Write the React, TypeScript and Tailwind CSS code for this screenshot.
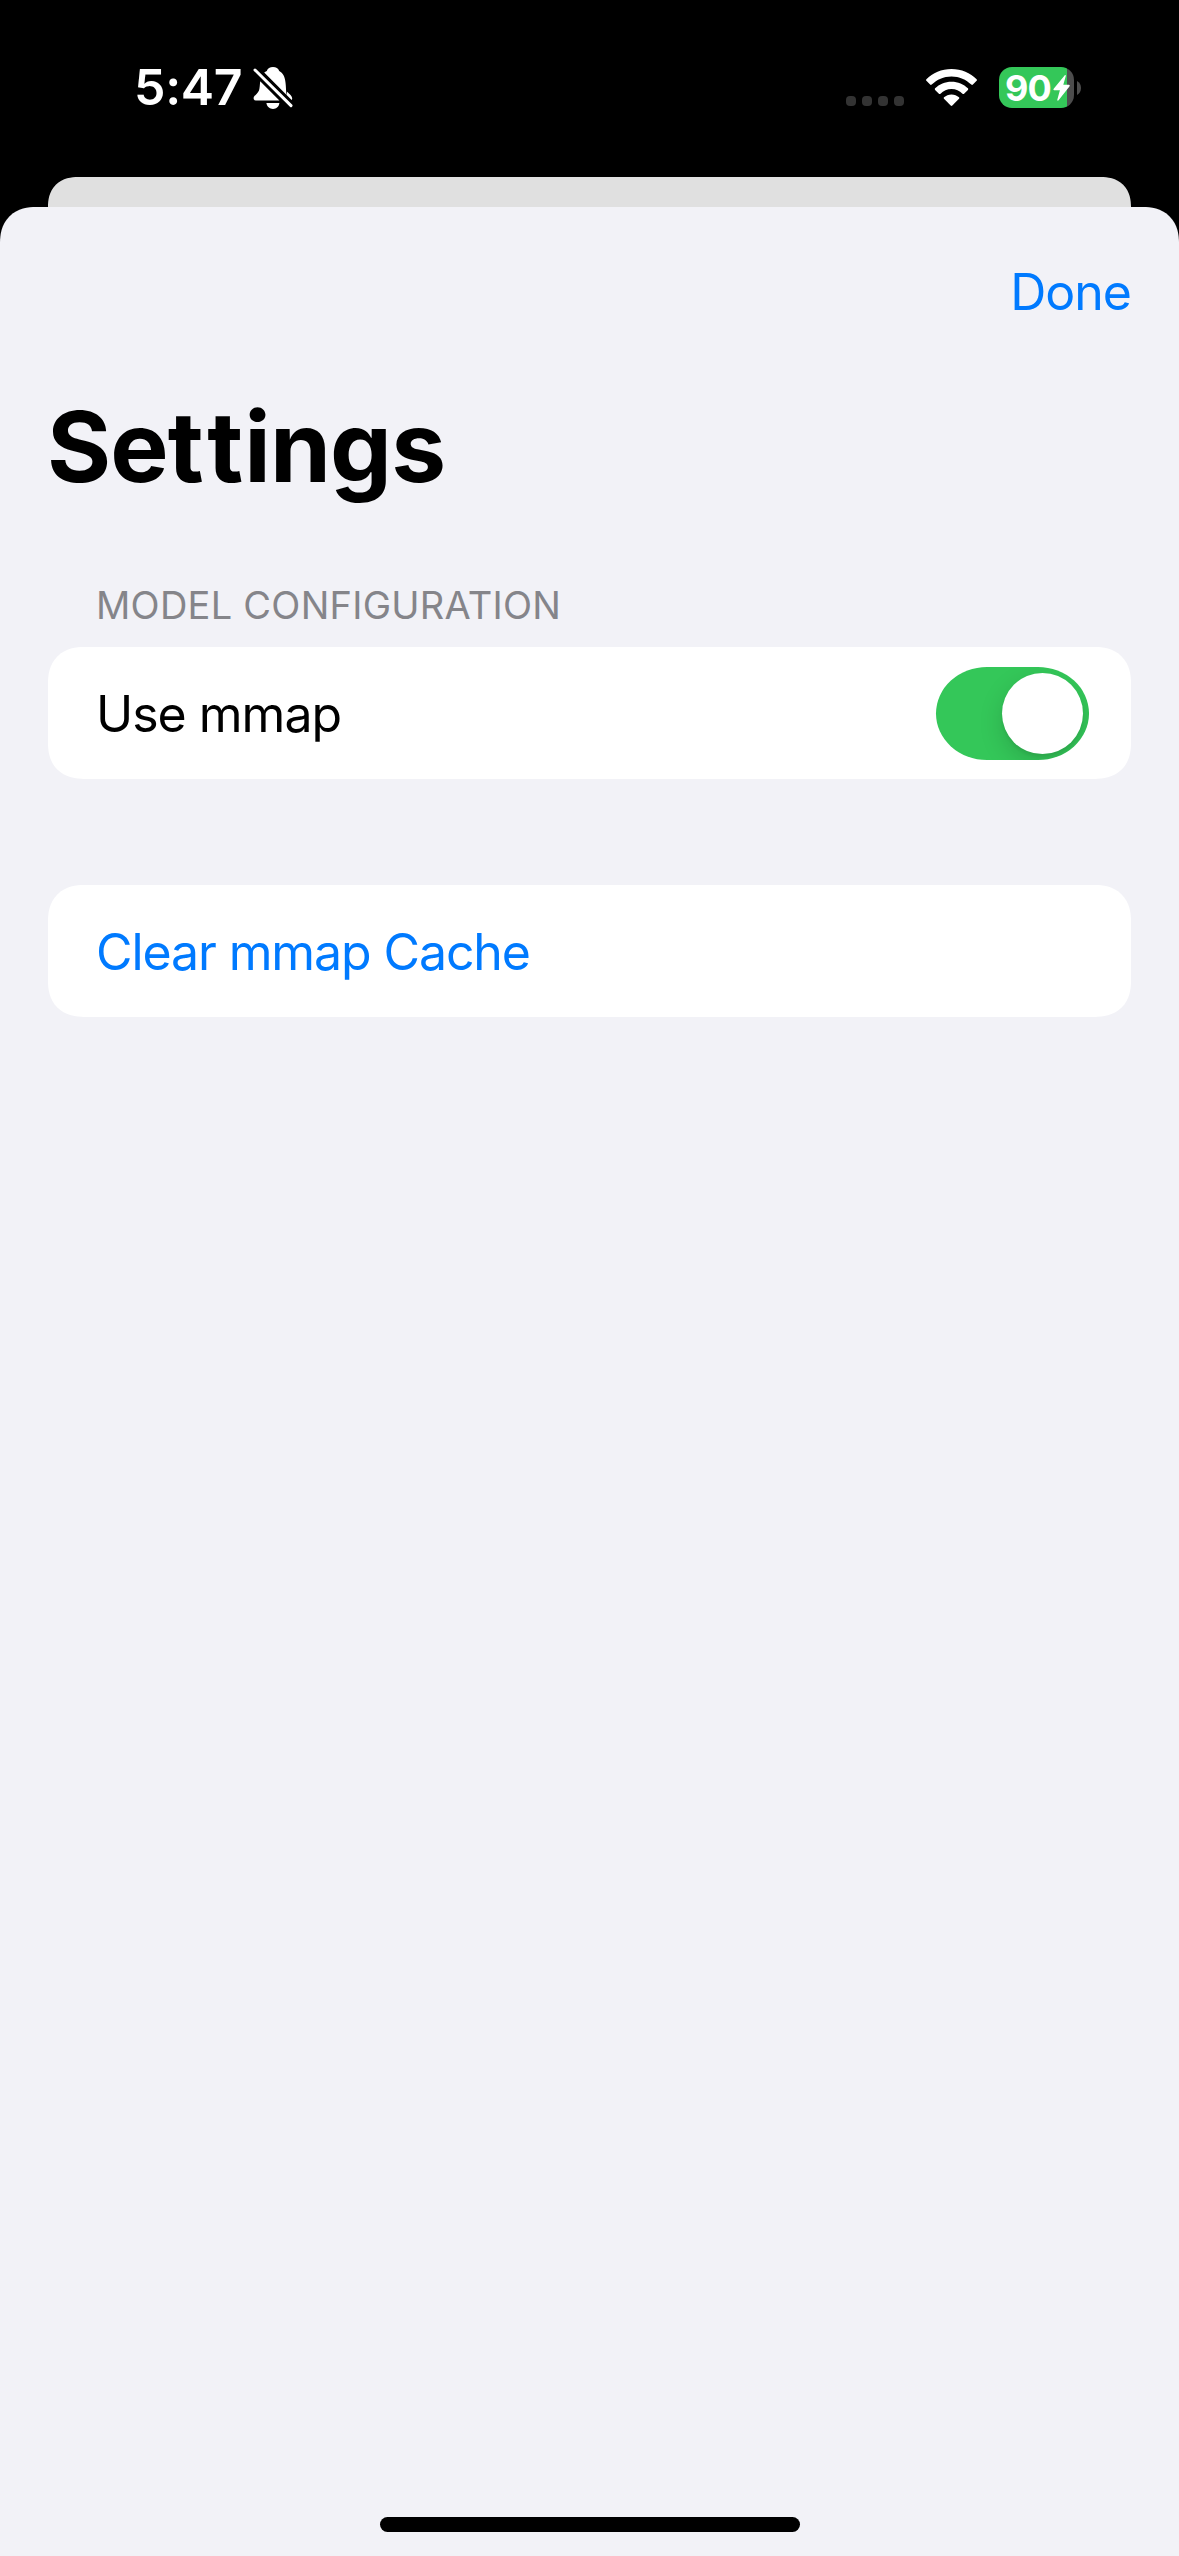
import { useState, type ReactNode } from "react";

function BellSlashIcon() {
  return (
    <svg className="block h-[44px] w-[40px]" viewBox="0 0 40 44" fill="white">
      <path d="M20 1 C17 1 14.5 2.6 13.8 5 C12.8 5.4 12 5.8 11.2 6.5 L33.6 29 C33.2 26.5 33 23 32.8 19.5 C32.4 11.5 30.4 7.2 26.2 5 C25.5 2.6 23 1 20 1 Z" />
      <path d="M7.2 15.2 L26.4 34.6 H3.4 C1.6 34.6 0.6 33.6 0.6 32.2 C0.6 29.6 4.8 27.6 6 24.4 C6.8 22 6.8 18.5 7.2 15.2 Z" />
      <path d="M13.4 37 H26.4 C26 40.6 23.4 42.9 20 42.9 C16.6 42.9 13.9 40.6 13.4 37 Z" />
      <path d="M34.2 25.8 C36.5 28.2 39.2 30 39.2 32.4 C39.2 33.2 38.9 33.8 38.6 34.1 L33.6 29 Z" />
      <path d="M2 4 L38 39.6" stroke="white" strokeWidth="3" strokeLinecap="round" />
    </svg>
  );
}

function WifiIcon() {
  return (
    <svg className="block h-[37px] w-[51px]" viewBox="0 0 51 37" fill="white">
      <path d="M25.5 0 C35.4 0 44.4 3.9 50.6 10.2 C51.1 10.7 51.1 11.3 50.6 11.8 L46.9 15.6 C46.4 16.1 45.8 16.1 45.3 15.6 C40.2 10.5 33.2 7.4 25.5 7.4 C17.8 7.4 10.8 10.5 5.7 15.6 C5.2 16.1 4.6 16.1 4.1 15.6 L0.4 11.8 C-0.1 11.3 -0.1 10.7 0.4 10.2 C6.6 3.9 15.6 0 25.5 0 Z" />
      <path d="M25.5 12.7 C31.9 12.7 37.7 15.2 41.9 19.3 C42.4 19.8 42.4 20.4 41.9 20.9 L38.1 24.7 C37.6 25.2 37 25.2 36.5 24.7 C33.6 21.8 29.8 20.1 25.5 20.1 C21.2 20.1 17.4 21.8 14.5 24.7 C14 25.2 13.4 25.2 12.9 24.7 L9.1 20.9 C8.6 20.4 8.6 19.8 9.1 19.3 C13.3 15.2 19.1 12.7 25.5 12.7 Z" />
      <path d="M25.5 25.4 C28.4 25.4 31 26.5 33 28.2 C33.5 28.7 33.5 29.3 33 29.8 L26.3 36.5 C25.8 37 25.2 37 24.7 36.5 L18 29.8 C17.5 29.3 17.5 28.7 18 28.2 C20 26.5 22.6 25.4 25.5 25.4 Z" />
    </svg>
  );
}

function Battery() {
  return (
    <div className="flex items-center">
      <div className="flex h-[41px] w-[75px] items-center rounded-[13px] bg-[linear-gradient(to_right,#34c759_68px,#4d4d4d_68px)] pl-[6px]">
        <span className="w-[48px] text-[36px] leading-[44px] font-bold tracking-[-1px] text-white">90</span>
        <svg className="block h-[26px] w-[17px] shrink-0" viewBox="0 0 17 26" fill="white">
          <path d="M11.6 0.4 C12.2 -0.2 13.1 0.2 12.8 1.1 L10.3 9.8 H15.8 C16.8 9.8 17 10.7 16.4 11.4 L5.6 25.3 C5 26 4 25.6 4.3 24.7 L6.9 15.2 H1.3 C0.4 15.2 0.1 14.4 0.7 13.7 Z" />
        </svg>
      </div>
      <svg className="ml-[3px] block h-[14px] w-[4px]" viewBox="0 0 4 14" fill="#4d4d4d">
        <path d="M0 0 C2.5 1.2 4 4 4 7 C4 10 2.5 12.8 0 14 Z" />
      </svg>
    </div>
  );
}

function StatusBar() {
  return (
    <div className="flex h-[177px] items-start justify-between pr-[98px] pl-[134px] text-white">
      <div className="flex items-start pt-[57px]">
        <span className="w-[119px] text-[50px] leading-[61px] font-semibold tracking-[-0.3px]">5:47</span>
        <div className="pt-[9px]">
          <BellSlashIcon />
        </div>
      </div>
      <div className="flex items-start pt-[67px]">
        <div className="flex gap-[6px] pt-[29px]">
          {[0, 1, 2, 3].map((dot) => (
            <span key={dot} className="size-[10px] rounded-[4px] bg-[#333333]" />
          ))}
        </div>
        <div className="pt-[2px] pr-[22px] pl-[22px]">
          <WifiIcon />
        </div>
        <Battery />
      </div>
    </div>
  );
}

function Card({ children }: { children: ReactNode }) {
  return (
    <div className="flex h-[132px] items-center justify-between rounded-[36px] bg-white pr-[42px] pl-[48px] [corner-shape:superellipse(1.2)]">
      {children}
    </div>
  );
}

function Toggle({ on, onChange }: { on: boolean; onChange: (on: boolean) => void }) {
  return (
    <button
      role="switch"
      aria-checked={on}
      aria-label="Use mmap"
      onClick={() => onChange(!on)}
      className={`flex h-[93px] w-[153px] items-center overflow-hidden rounded-[51px/46.5px] px-[6px] ${on ? "justify-end bg-[#34c759]" : "justify-start bg-[#e9e9eb]"}`}
    >
      <span className="size-[81px] rounded-full bg-white shadow-[0_9px_24px_rgba(0,0,0,0.15),0_3px_3px_rgba(0,0,0,0.06)]" />
    </button>
  );
}

export default function App() {
  const [useMmap, setUseMmap] = useState(true);
  return (
    <div className="flex h-[2556px] w-[1179px] flex-col overflow-hidden bg-black font-['Inter',sans-serif]">
      <StatusBar />
      <div className="mx-[48px] h-[30px] rounded-t-[36px] bg-[#e0e0e0] [corner-shape:superellipse(1.2)]" />
      <main className="flex flex-1 flex-col rounded-t-[36px] bg-[#f2f2f7] px-[48px] [corner-shape:superellipse(1.2)]">
        <nav className="flex h-[170px] items-center justify-end">
          <button className="text-[50px] leading-[60px] tracking-[-1px] text-[#007aff]">Done</button>
        </nav>
        <h1 className="mt-[10px] -ml-px text-[98px] leading-[120px] font-bold tracking-[-0.9px] text-black">
          Se<span className="tracking-[3.6px]">t</span><span className="tracking-[1.2px]">t</span>ings
        </h1>
        <h2 className="mt-[74px] pl-[48px] text-[38px] leading-[48px] tracking-[0.25px] text-[#85858a]">
          MODEL CONFIGURATION
        </h2>
        <div className="mt-[18px] flex flex-col gap-[106px]">
          <Card>
            <span className="pt-[2px] text-[50px] leading-[60px] tracking-[-1px] text-black">Use mmap</span>
            <Toggle on={useMmap} onChange={setUseMmap} />
          </Card>
          <Card>
            <button className="pt-[2px] text-[50px] leading-[60px] tracking-[-1.1px] text-[#007aff]">
              Clear mmap Cache
            </button>
          </Card>
        </div>
        <div className="mt-auto mb-[24px] h-[15px] w-[420px] self-center rounded-full bg-black" />
      </main>
    </div>
  );
}
